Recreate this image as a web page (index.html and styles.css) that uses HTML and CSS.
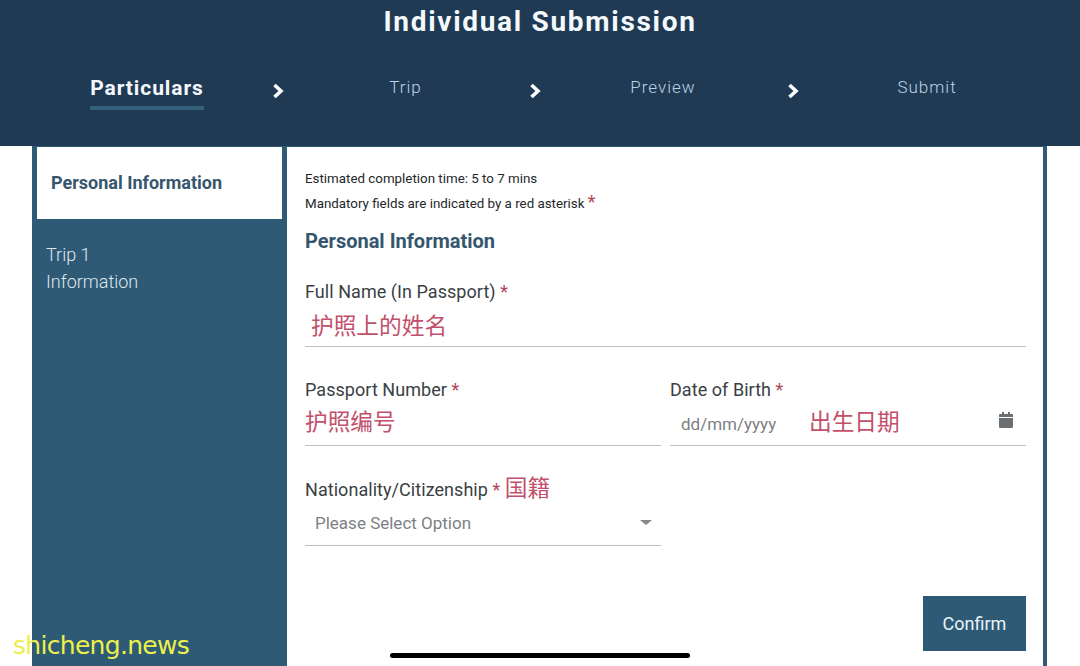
FILE: index.html

```html
<!DOCTYPE html>
<html lang="en">
<head>
  <meta charset="UTF-8">
  <meta name="viewport" content="width=device-width, initial-scale=1.0">
  <title>Individual Submission</title>
  <link rel="stylesheet" href="styles.css">
</head>
<body>
  <header class="header">
    <h1>Individual Submission</h1>
    <nav class="steps">
      <div class="step active"><span>Particulars</span></div>
      <svg class="chevron" viewBox="0 0 12 16"><path d="M2.5 2 L9 8 L2.5 14" /></svg>
      <div class="step"><span>Trip</span></div>
      <svg class="chevron" viewBox="0 0 12 16"><path d="M2.5 2 L9 8 L2.5 14" /></svg>
      <div class="step"><span>Preview</span></div>
      <svg class="chevron" viewBox="0 0 12 16"><path d="M2.5 2 L9 8 L2.5 14" /></svg>
      <div class="step"><span>Submit</span></div>
    </nav>
  </header>

  <div class="shell">
    <aside class="sidebar">
      <div class="side-item active">Personal Information</div>
      <div class="side-item">Trip 1<br>Information</div>
    </aside>

    <main class="form">
      <p class="note">Estimated completion time: 5 to 7 mins</p>
      <p class="note note-second">Mandatory fields are indicated by a red asterisk <span class="req big">*</span></p>
      <h2>Personal Information</h2>

      <div class="field name-field">
        <label>Full Name (In Passport) <span class="req">*</span></label>
        <div class="control name-control"><span class="cn">护照上的姓名</span></div>
      </div>

      <div class="row row-first">
        <div class="field">
          <label>Passport Number <span class="req">*</span></label>
          <div class="control"><span class="cn">护照编号</span></div>
        </div>
        <div class="field">
          <label>Date of Birth <span class="req">*</span></label>
          <div class="control date-control">
            <span class="placeholder">dd/mm/yyyy</span>
            <span class="cn date-cn">出生日期</span>
            <svg class="calendar" viewBox="0 0 14 16"><path d="M3 0h2v2h4V0h2v2h2a1 1 0 0 1 1 1v2H0V3a1 1 0 0 1 1-1h2zM0 6h14v9a1 1 0 0 1-1 1H1a1 1 0 0 1-1-1z" /></svg>
          </div>
        </div>
      </div>

      <div class="row">
        <div class="field half">
          <label>Nationality/Citizenship <span class="req">*</span> <span class="cn cn-label">国籍</span></label>
          <div class="control select-control">
            <span class="placeholder">Please Select Option</span>
            <span class="caret"></span>
          </div>
        </div>
      </div>

      <div class="actions">
        <button>Confirm</button>
      </div>
    </main>
  </div>

  <div class="home-bar"></div>
  <div class="watermark">shicheng.news</div>
</body>
</html>
```

FILE: styles.css

```css
html, body {
  height: 100%;
}
body {
  margin: 0;
  height: 666px;
  overflow: hidden;
  position: relative;
  background-color: #ffffff;
  color: #3a3f44;
  font-family: Roboto, "Noto Sans CJK SC", sans-serif;
  display: flex;
  flex-direction: column;
}
.header {
  height: 146px;
  background-color: #203a53;
  color: #f3f9fd;
  flex-shrink: 0;
}
h1 {
  margin: 0;
  padding-top: 5px;
  font-size: 28px;
  line-height: 33px;
  font-weight: 700;
  letter-spacing: 1.7px;
  text-align: center;
}
.steps {
  display: grid;
  grid-template-columns: 242px 20px 237px 20px 238px 20px 250px;
  margin: 38px 0 0 26px;
  align-items: start;
}
.step {
  display: flex;
  justify-content: center;
  padding-right: 2px;
  font-size: 17px;
  font-weight: 300;
  line-height: 22px;
  letter-spacing: 1px;
  color: #bcd3e6;
}
.step span {
  display: block;
  padding-bottom: 6px;
}
.step.active {
  padding-right: 0;
  font-size: 21px;
  line-height: 25px;
  font-weight: 700;
  color: #f3f9fd;
  letter-spacing: 0.9px;
}
.step.active span {
  border-bottom: 4px solid #35607a;
  padding-bottom: 5px;
}
.chevron {
  width: 12px;
  height: 16px;
  margin-top: 7px;
  justify-self: center;
  fill: none;
  stroke: #ffffff;
  stroke-width: 3.6;
}
.shell {
  flex: 1;
  display: flex;
  margin: 0 33px 0 32px;
  padding: 1px 4px 0 5px;
  background-color: #2f5a75;
}
.sidebar {
  width: 245px;
  flex-shrink: 0;
  margin-right: 5px;
}
.side-item {
  padding: 22px 9px;
  font-size: 18px;
  line-height: 27px;
  font-weight: 300;
  color: #dfe8ee;
}
.side-item.active {
  height: 72px;
  box-sizing: border-box;
  padding: 22px 14px;
  background-color: #ffffff;
  color: #35566d;
  font-weight: 700;
  line-height: 27px;
}
.form {
  flex: 1;
  background-color: #ffffff;
  padding: 23px 17px 0 18px;
}
.note {
  margin: 0;
  font-size: 13.35px;
  line-height: 18px;
  color: #25282b;
}
.note-second {
  margin-top: 5px;
}
.req {
  color: #b0455c;
}
.req.big {
  font-size: 18px;
  line-height: 18px;
}
h2 {
  margin: 15px 0 0;
  font-size: 20px;
  line-height: 26px;
  font-weight: 700;
  color: #35566d;
}
.field {
  flex: 1;
  min-width: 0;
}
.half {
  flex: 0 0 calc(50% - 4.5px);
}
.name-field {
  margin-top: 27px;
}
label {
  display: block;
  height: 21px;
  font-size: 18px;
  line-height: 21px;
  letter-spacing: 0.05px;
  color: #3a3f44;
}
.control {
  height: 46px;
  box-sizing: border-box;
  border-bottom: 1px solid #bdbfc1;
  display: flex;
  align-items: center;
}
.name-control {
  height: 45px;
  padding-left: 6px;
}
.cn {
  font-size: 22.7px;
  font-weight: 400;
  color: #c2506a;
  font-family: "Noto Sans CJK SC", sans-serif;
}
.cn-label {
  line-height: 0;
}
.row {
  display: flex;
  gap: 9px;
  margin-top: 33px;
}
.row-first {
  margin-top: 32px;
}
.row .cn:not(.cn-label) {
  margin-bottom: 4px;
}
.date-control {
  padding: 0 13px 0 11px;
}
.placeholder {
  font-size: 17px;
  color: #7d8084;
}
.date-control .placeholder {
  width: 128px;
  flex-shrink: 0;
  padding-top: 2px;
}
.date-cn {
  flex: 1;
}
.calendar {
  width: 14px;
  height: 16px;
  fill: #6c6f72;
  margin-bottom: 5px;
}
.select-control {
  padding: 0 9px 0 10px;
  justify-content: space-between;
}
.caret {
  width: 0;
  height: 0;
  border-left: 6px solid transparent;
  border-right: 6px solid transparent;
  border-top: 5px solid #85888b;
}
.actions {
  display: flex;
  justify-content: flex-end;
  margin-top: 50px;
}
button {
  width: 103px;
  height: 55px;
  border: none;
  background-color: #2f5a75;
  color: #e8f4fb;
  font-family: inherit;
  font-size: 18px;
}
.home-bar {
  position: absolute;
  left: 390px;
  top: 653px;
  width: 300px;
  height: 5px;
  border-radius: 3px;
  background-color: #000000;
}
.watermark {
  position: absolute;
  left: 13px;
  top: 631px;
  font-family: "DejaVu Sans", sans-serif;
  font-size: 25px;
  line-height: 30px;
  letter-spacing: -0.7px;
  color: #eef04a;
}
```
